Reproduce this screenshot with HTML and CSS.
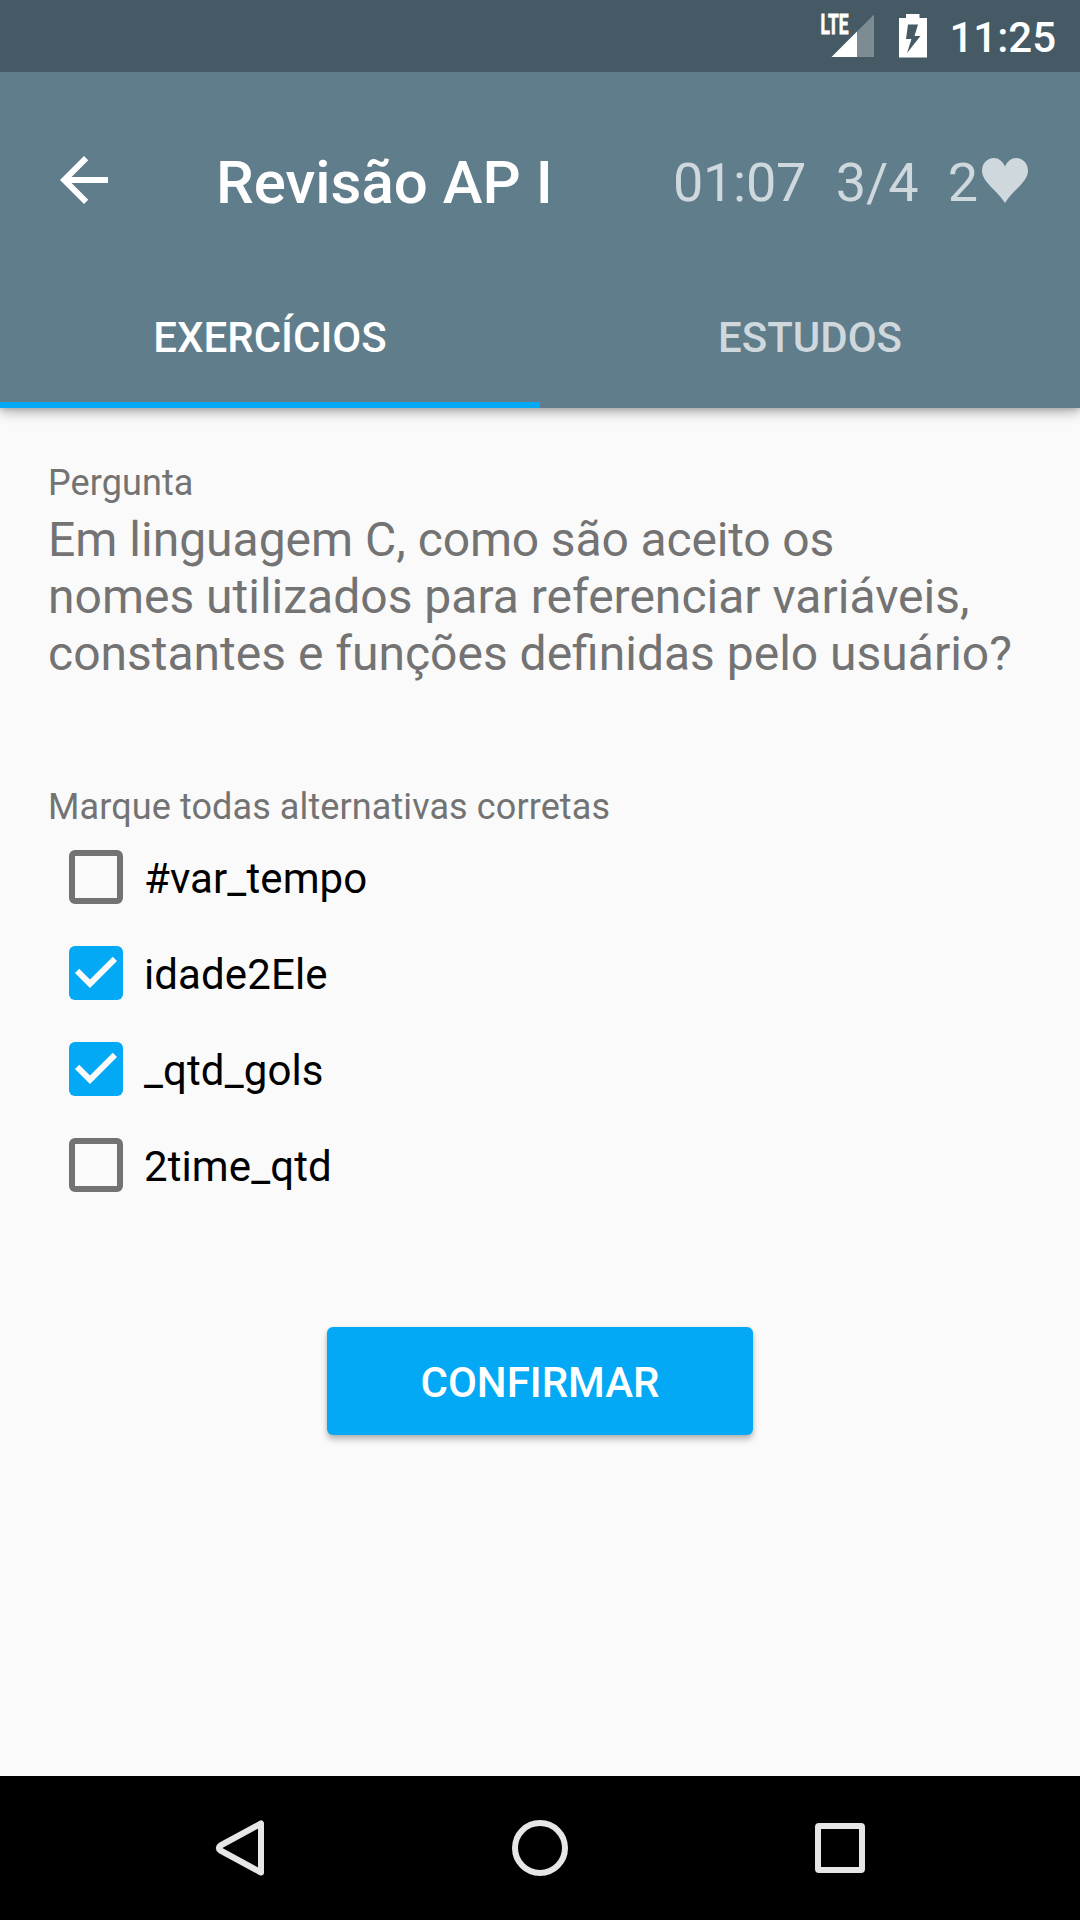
FILE: index.html
```html
<!DOCTYPE html>
<html lang="pt-BR">
<head>
<meta charset="utf-8">
<title>Revisão AP I</title>
<link rel="stylesheet" href="styles.css">
</head>
<body>
<div class="screen">
  <div class="status-bar">
    <svg class="signal" width="58" height="60" viewBox="818 6 58 60">
      <text class="lte" x="820.500" y="34" textLength="28" lengthAdjust="spacingAndGlyphs">LTE</text>
      <path d="M857 31.500L874 14.500V57H857z" fill="#fff" fill-opacity=".3"/>
      <path d="M831.500 57L857 31.500V57z" fill="#fff"/>
    </svg>
    <svg class="battery" width="28" height="48" viewBox="899 12 28 48">
      <path fill="#fff" fill-rule="evenodd" d="M906 14h13.500v4H927v39.500H899V18h7zM908 24.500L906 39H911.500L907 53L920.500 36H914.500L918 24.500z"/>
    </svg>
    <span class="clock">11:25</span>
  </div>
  <header class="app-bar">
    <div class="toolbar">
      <svg class="back" width="72" height="72" viewBox="0 0 24 24"><path fill="#fff" d="M20 11H7.830l5.590-5.590L12 4l-8 8 8 8 1.410-1.410L7.830 13H20v-2z"/></svg>
      <h1 class="title">Revisão AP I</h1>
      <div class="stats">
        <span class="timer">01:07</span>
        <span class="progress">3/4</span>
        <span>2</span>
        <svg class="heart" width="46" height="45" viewBox="0 0 46 45"><path fill="currentColor" d="M23 8.500C20.500 3 16.500 0 12 0C5 0 0 5.500 0 13C0 24 16 33 23 45C30 33 46 24 46 13C46 5.500 41 0 34 0C29.500 0 25.500 3 23 8.500z"/></svg>
      </div>
    </div>
    <nav class="tabs">
      <div class="tab tab-active">EXERCÍCIOS</div>
      <div class="tab">ESTUDOS</div>
    </nav>
  </header>
  <main class="content">
    <p class="label">Pergunta</p>
    <p class="question">Em linguagem C, <span class="tight">como são aceito os</span><br>nomes utilizados para referenciar variáveis,<br>constantes e funções definidas pelo usuário?</p>
    <p class="label">Marque todas alternativas corretas</p>
    <div class="options">
      <div class="option"><span class="box"></span><span class="option-text">#var_tempo</span></div>
      <div class="option"><span class="box checked"><svg width="54" height="54" viewBox="3 3 18 18"><path fill="#fafafa" d="M10 17L5 12l1.410-1.410L10 14.170l7.590-7.590L19 8z"/></svg></span><span class="option-text">idade2Ele</span></div>
      <div class="option"><span class="box checked"><svg width="54" height="54" viewBox="3 3 18 18"><path fill="#fafafa" d="M10 17L5 12l1.410-1.410L10 14.170l7.590-7.590L19 8z"/></svg></span><span class="option-text">_qtd_gols</span></div>
      <div class="option"><span class="box"></span><span class="option-text">2time_qtd</span></div>
    </div>
    <button class="confirm">CONFIRMAR</button>
  </main>
  <div class="nav-bar">
    <svg width="60" height="60" viewBox="0 0 60 60"><path class="nav-line" d="M51 5.500V54.500L10.500 32.500Q7 30 10.500 27.500z"/></svg>
    <svg width="60" height="60" viewBox="0 0 60 60"><circle class="nav-line" cx="30" cy="30" r="25"/></svg>
    <svg width="60" height="60" viewBox="0 0 60 60"><rect class="nav-line" x="8" y="8" width="44" height="44" rx="1"/></svg>
  </div>
</div>
</body>
</html>
```
FILE: styles.css
```css
* { box-sizing: border-box; margin: 0; padding: 0; }
body { font-family: Roboto, "Noto Sans", sans-serif; background: #fafafa; }
svg { display: block; flex: none; }
.screen { width: 1080px; height: 1920px; display: flex; flex-direction: column; overflow: hidden; }

.status-bar { position: relative; z-index: 1; height: 72px; background: #455a64; display: flex; align-items: center; justify-content: flex-end; padding-right: 24px; }
.signal { overflow: visible; }
.battery { margin: 0 22px 0 23px; }
.lte { font-weight: 700; font-size: 27px; fill: #fff; stroke: #fff; stroke-width: .8; }
.clock { color: #fff; font-weight: 500; font-size: 42px; line-height: 48px; padding-top: 4px; }

.app-bar { height: 336px; background: #607d8b; padding-top: 24px; box-shadow: 0 4px 12px rgba(0,0,0,.3), 0 1px 5px rgba(0,0,0,.15); }
.toolbar { height: 168px; display: flex; align-items: center; padding: 0 52px 0 48px; }
.title { margin-left: 96px; color: #fff; font-size: 60px; font-weight: 500; line-height: 70px; padding-top: 6px; white-space: nowrap; }
.stats { margin-left: auto; display: flex; align-items: center; font-size: 54px; line-height: 64px; color: #cfd8dc; padding-top: 6px; white-space: nowrap; }
.timer { letter-spacing: -.25px; margin-right: 29.5px; }
.progress { margin-right: 29px; }
.heart { margin: 0 0 6px 4px; }
.tabs { height: 144px; display: flex; }
.tab { flex: 1; display: flex; align-items: center; justify-content: center; font-size: 42px; font-weight: 500; color: #cfd8dc; border-bottom: 6px solid transparent; padding-top: 8px; }
.tab-active { color: #fff; border-bottom-color: #03a9f4; }

.content { flex: 1; display: flex; flex-direction: column; padding: 54px 48px 0; }
.label { font-size: 36px; line-height: 42px; letter-spacing: .1px; color: #737373; }
.question { font-size: 48px; line-height: 57px; color: #737373; margin: 7px 0 104px; }
.tight { letter-spacing: -.14px; }
.options { display: flex; flex-direction: column; padding: 0 21px; margin-top: 1px; }
.option { height: 96px; display: flex; align-items: center; gap: 21px; font-size: 42px; color: #000; }
.option-text { letter-spacing: .1px; padding-top: 2px; }
.box { width: 54px; height: 54px; border: 6px solid #737373; border-radius: 6px; flex: none; }
.checked { border: 0; background: #03a9f4; }
.confirm { align-self: center; width: 426px; height: 108px; margin-top: 114px; padding-top: 2px; border: 0; border-radius: 6px; background: #03a9f4; color: #fff; font: 500 42px Roboto, sans-serif; box-shadow: 0 5px 6px rgba(0,0,0,.22), 0 1px 4px rgba(0,0,0,.12); }

.nav-bar { height: 144px; background: #000; display: flex; align-items: center; justify-content: center; gap: 240px; }
.nav-line { fill: none; stroke: #e6e6e6; stroke-width: 6; stroke-linejoin: round; }
```
